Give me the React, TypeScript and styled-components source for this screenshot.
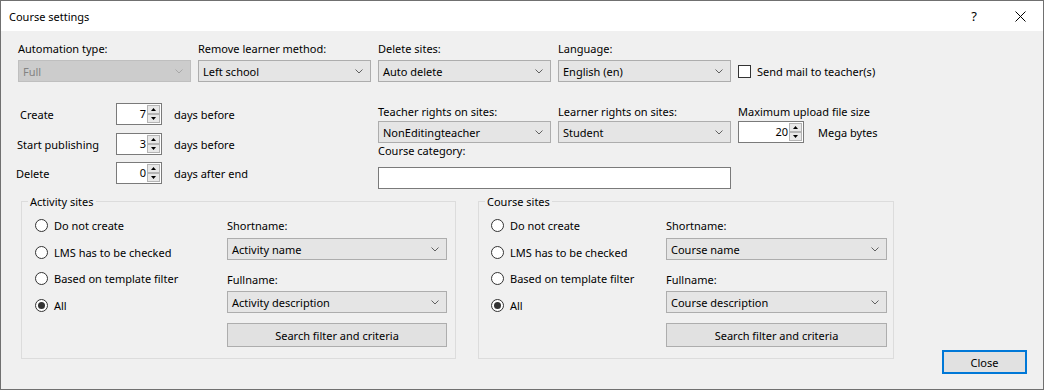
import React from "react";
import styled, { createGlobalStyle } from "styled-components";

const GlobalStyle = createGlobalStyle`
  html, body {
    margin: 0;
    padding: 0;
    background: #ffffff;
  }
  body {
    font-family: "Noto Sans", "Open Sans", sans-serif;
    font-size: 11px;
    color: #000000;
  }
  * {
    box-sizing: border-box;
  }
`;

const Window = styled.div`
  width: 1044px;
  height: 390px;
  border: 1px solid #707070;
  display: flex;
  flex-direction: column;
  background: #f0f0f0;
`;

const TitleBar = styled.div`
  height: 30px;
  flex-shrink: 0;
  background: #ffffff;
  display: flex;
  align-items: center;
`;

const Title = styled.div`
  flex: 1;
  padding-left: 8px;
`;

const CaptionButton = styled.div`
  width: 46px;
  height: 30px;
  display: flex;
  align-items: center;
  justify-content: center;
  font-size: 13px;
`;

const Content = styled.div`
  flex: 1;
  display: flex;
  flex-direction: column;
  padding: 10px 0 15px 16px;
`;

const TopGrid = styled.div`
  display: grid;
  grid-template-columns: repeat(4, 173px) auto;
  column-gap: 7px;
  margin-left: 1px;
`;

const Field = styled.div`
  display: flex;
  flex-direction: column;
`;

const Label = styled.div<{ $gap?: number; $top?: number }>`
  height: 15px;
  line-height: 15px;
  margin-top: ${(p) => p.$top ?? 0}px;
  margin-bottom: ${(p) => p.$gap ?? 4}px;
  white-space: nowrap;
`;

const SelectBox = styled.div<{ $disabled?: boolean }>`
  height: 22px;
  display: flex;
  align-items: center;
  padding: 0 7px 0 4px;
  border: 1px solid ${(p) => (p.$disabled ? "#bfbfbf" : "#adadad")};
  background: ${(p) => (p.$disabled ? "#cccccc" : "#e5e5e5")};
  color: ${(p) => (p.$disabled ? "#838383" : "#000000")};

  span {
    flex: 1;
    white-space: nowrap;
  }

  svg {
    flex-shrink: 0;
  }
`;

const CheckRow = styled.div`
  height: 22px;
  align-self: end;
  display: flex;
  align-items: center;
  gap: 6px;
  white-space: nowrap;
`;

const CheckBox = styled.div`
  width: 13px;
  height: 13px;
  border: 1px solid #333333;
  background: #ffffff;
`;

const MiddleRow = styled.div`
  display: flex;
  margin-top: 21px;
`;

const SpinColumn = styled.div`
  width: 361px;
  display: flex;
  flex-direction: column;
`;

const SpinRow = styled.div<{ $indent: number; $gap: number }>`
  display: grid;
  grid-template-columns: 99px 46px auto;
  align-items: center;
  margin-bottom: ${(p) => p.$gap}px;

  > span:first-child {
    margin-left: ${(p) => p.$indent}px;
    white-space: nowrap;
  }

  > span:last-child {
    padding-left: 12px;
    white-space: nowrap;
  }
`;

const SpinBox = styled.div<{ $w: number }>`
  width: ${(p) => p.$w}px;
  height: 22px;
  border: 1px solid #7a7a7a;
  background: #ffffff;
  display: flex;
  padding: 1px;
`;

const SpinValue = styled.div`
  flex: 1;
  text-align: right;
  line-height: 18px;
  padding-right: 1px;
`;

const SpinButtons = styled.div`
  width: 13px;
  display: flex;
  flex-direction: column;
`;

const SpinButton = styled.div`
  flex: 1;
  border: 1px solid #b4b4b4;
  background: #e8e8e8;
  display: flex;
  align-items: center;
  justify-content: center;
`;

const RightGrid = styled.div`
  display: grid;
  grid-template-columns: 173px 173px auto;
  column-gap: 7px;
  margin-top: 1px;
`;

const UploadRow = styled.div`
  display: flex;
  align-items: center;
  gap: 14px;
  white-space: nowrap;
`;

const CategoryField = styled.div`
  grid-column: 1 / span 2;
  display: flex;
  flex-direction: column;
`;

const TextInput = styled.div`
  height: 22px;
  border: 1px solid #7a7a7a;
  background: #ffffff;
`;

const BottomRow = styled.div`
  flex: 1;
  display: flex;
  margin-top: 5px;
`;

const Group = styled.fieldset<{ $w: number; $ml: number }>`
  width: ${(p) => p.$w}px;
  flex-shrink: 0;
  margin: 0 0 0 ${(p) => p.$ml}px;
  padding: 0;
  border: 1px solid #dcdcdc;
  align-self: flex-start;
  min-inline-size: 0;

  legend {
    margin-left: 6px;
    padding: 0 2px;
    line-height: 15px;
  }
`;

const GroupBody = styled.div<{ $col: number; $pl: number; $pr: number }>`
  display: grid;
  grid-template-columns: ${(p) => p.$col}px 1fr;
  padding: 9px ${(p) => p.$pr}px 11px ${(p) => p.$pl}px;
`;

const RadioList = styled.div`
  display: grid;
  grid-auto-rows: 15px;
  row-gap: 11.67px;
  align-content: start;
`;

const RadioRow = styled.div`
  display: flex;
  align-items: center;
  gap: 6px;
  white-space: nowrap;
`;

const RadioCircle = styled.div<{ $checked?: boolean }>`
  width: 13px;
  height: 13px;
  border-radius: 50%;
  border: 1px solid #333333;
  background: #ffffff;
  display: flex;
  align-items: center;
  justify-content: center;

  &::after {
    content: "";
    width: 7px;
    height: 7px;
    border-radius: 50%;
    background: ${(p) => (p.$checked ? "#333333" : "transparent")};
  }
`;

const NameColumn = styled.div`
  display: flex;
  flex-direction: column;
`;

const PushButton = styled.div<{ $primary?: boolean; $top?: number }>`
  height: 24px;
  margin-top: ${(p) => p.$top ?? 0}px;
  display: flex;
  align-items: center;
  justify-content: center;
  background: #e1e1e1;
  border: ${(p) => (p.$primary ? "2px solid #0078d7" : "1px solid #adadad")};
`;

const CloseButton = styled(PushButton)`
  width: 85px;
  flex-shrink: 0;
  margin-left: 48px;
  align-self: flex-end;
`;

const Chevron = ({ disabled }: { disabled?: boolean }) => (
  <svg width="8" height="5" viewBox="0 0 8 5">
    <path d="M0.5 0.5 L4 4 L7.5 0.5" fill="none" stroke={disabled ? "#a8a8a8" : "#606060"} strokeWidth="1" />
  </svg>
);

const Select = ({ value, disabled }: { value: string; disabled?: boolean }) => (
  <SelectBox $disabled={disabled}>
    <span>{value}</span>
    <Chevron disabled={disabled} />
  </SelectBox>
);

const Spinner = ({ value, width }: { value: string; width: number }) => (
  <SpinBox $w={width}>
    <SpinValue>{value}</SpinValue>
    <SpinButtons>
      <SpinButton>
        <svg width="5" height="3" viewBox="0 0 5 3">
          <path d="M0 3 L2.5 0 L5 3 Z" fill="#000" />
        </svg>
      </SpinButton>
      <SpinButton>
        <svg width="5" height="3" viewBox="0 0 5 3">
          <path d="M0 0 L5 0 L2.5 3 Z" fill="#000" />
        </svg>
      </SpinButton>
    </SpinButtons>
  </SpinBox>
);

const radios = ["Do not create", "LMS has to be checked", "Based on template filter", "All"];

interface SitesProps {
  title: string;
  width: number;
  ml: number;
  col: number;
  pl: number;
  pr: number;
  shortname: string;
  fullname: string;
}

function SitesGroup({ title, width, ml, col, pl, pr, shortname, fullname }: SitesProps) {
  return (
    <Group $w={width} $ml={ml}>
      <legend>{title}</legend>
      <GroupBody $col={col} $pl={pl} $pr={pr}>
        <RadioList>
          {radios.map((r) => (
            <RadioRow key={r}>
              <RadioCircle $checked={r === "All"} />
              {r}
            </RadioRow>
          ))}
        </RadioList>
        <NameColumn>
          <Label $gap={5}>Shortname:</Label>
          <Select value={shortname} />
          <Label $top={12} $gap={4}>Fullname:</Label>
          <Select value={fullname} />
          <PushButton $top={10}>Search filter and criteria</PushButton>
        </NameColumn>
      </GroupBody>
    </Group>
  );
}

export default function App() {
  return (
    <>
      <GlobalStyle />
      <Window>
        <TitleBar>
          <Title>Course settings</Title>
          <CaptionButton>?</CaptionButton>
          <CaptionButton>
            <svg width="11" height="11" viewBox="0 0 11 11">
              <path d="M0.5 0.5 L10.5 10.5 M10.5 0.5 L0.5 10.5" stroke="#000" strokeWidth="1" />
            </svg>
          </CaptionButton>
        </TitleBar>
        <Content>
          <TopGrid>
            <Field>
              <Label>Automation type:</Label>
              <Select value="Full" disabled />
            </Field>
            <Field>
              <Label>Remove learner method:</Label>
              <Select value="Left school" />
            </Field>
            <Field>
              <Label>Delete sites:</Label>
              <Select value="Auto delete" />
            </Field>
            <Field>
              <Label>Language:</Label>
              <Select value="English (en)" />
            </Field>
            <CheckRow>
              <CheckBox />
              Send mail to teacher(s)
            </CheckRow>
          </TopGrid>

          <MiddleRow>
            <SpinColumn>
              <SpinRow $indent={3} $gap={8}>
                <span>Create</span>
                <Spinner value="7" width={46} />
                <span>days before</span>
              </SpinRow>
              <SpinRow $indent={0} $gap={7}>
                <span>Start publishing</span>
                <Spinner value="3" width={46} />
                <span>days before</span>
              </SpinRow>
              <SpinRow $indent={-1} $gap={0}>
                <span>Delete</span>
                <Spinner value="0" width={46} />
                <span>days after end</span>
              </SpinRow>
            </SpinColumn>
            <RightGrid>
              <Field>
                <Label $gap={2}>Teacher rights on sites:</Label>
                <Select value="NonEditingteacher" />
              </Field>
              <Field>
                <Label $gap={2}>Learner rights on sites:</Label>
                <Select value="Student" />
              </Field>
              <Field>
                <Label $gap={2}>Maximum upload file size</Label>
                <UploadRow>
                  <Spinner value="20" width={66} />
                  Mega bytes
                </UploadRow>
              </Field>
              <CategoryField>
                <Label $gap={9}>Course category:</Label>
                <TextInput />
              </CategoryField>
            </RightGrid>
          </MiddleRow>

          <BottomRow>
            <SitesGroup
              title="Activity sites"
              width={435}
              ml={4}
              col={192}
              pl={13}
              pr={8}
              shortname="Activity name"
              fullname="Activity description"
            />
            <SitesGroup
              title="Course sites"
              width={416}
              ml={22}
              col={175}
              pl={12}
              pr={6}
              shortname="Course name"
              fullname="Course description"
            />
            <CloseButton $primary>Close</CloseButton>
          </BottomRow>
        </Content>
      </Window>
    </>
  );
}
